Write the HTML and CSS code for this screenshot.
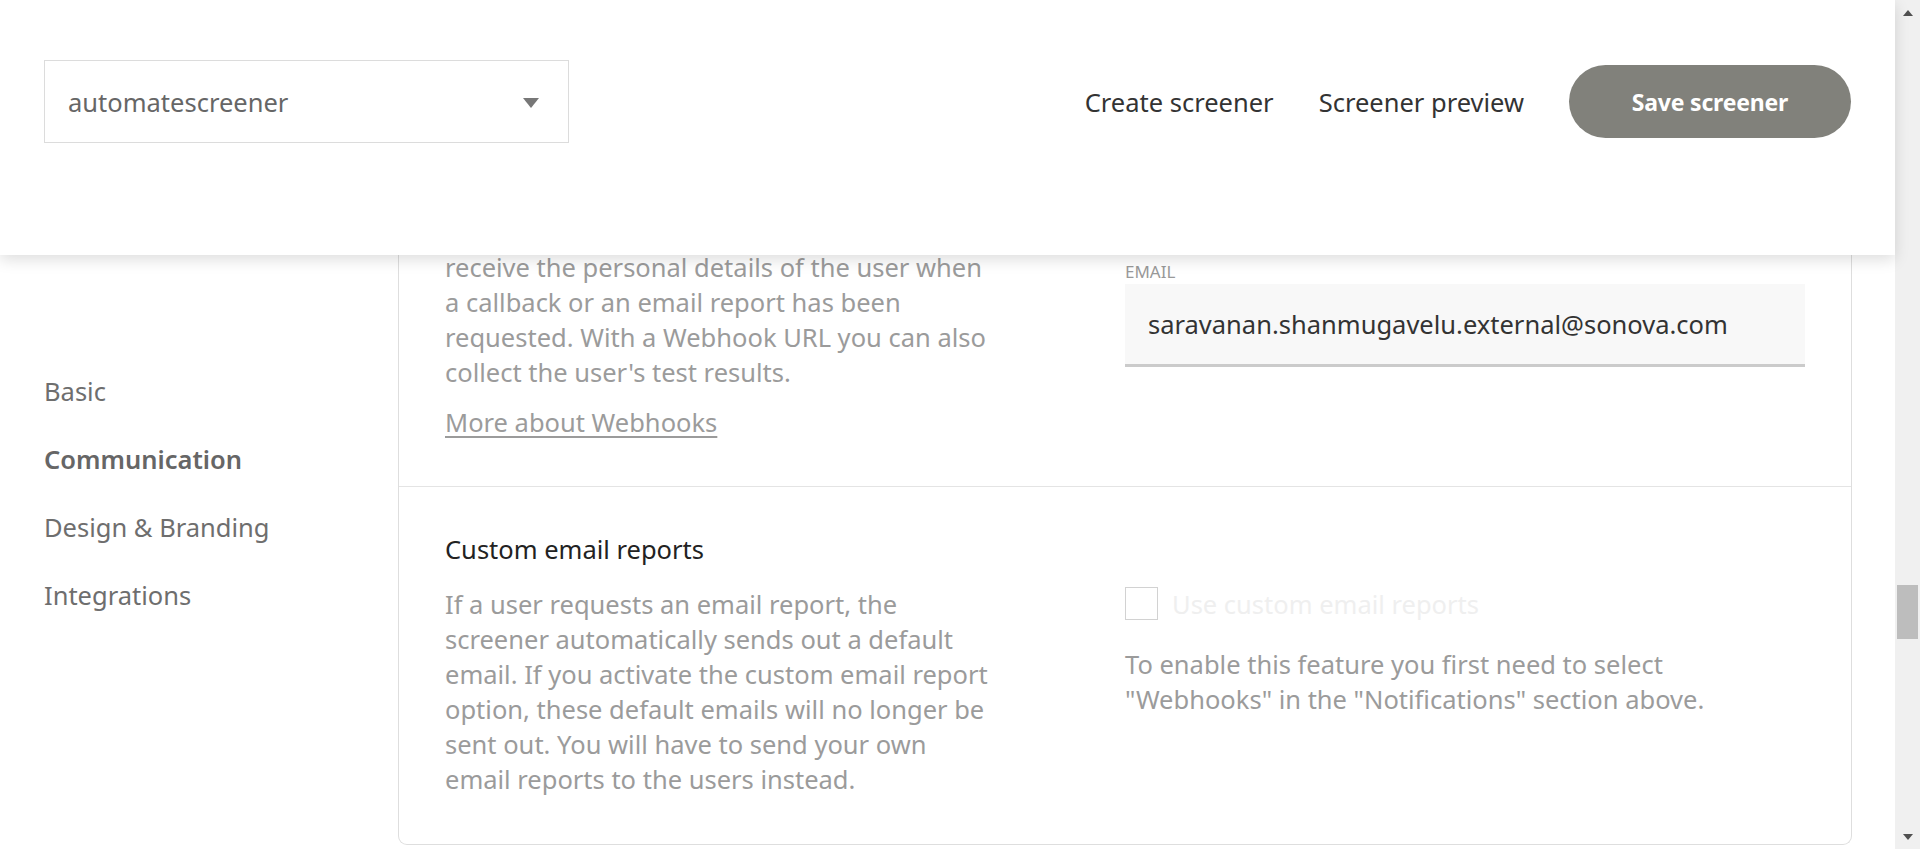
FILE: index.html
```html
<!DOCTYPE html>
<html lang="en">
<head>
<meta charset="utf-8">
<title>Screener settings</title>
<link rel="stylesheet" href="styles.css">
</head>
<body>
<div class="app">
  <div class="page">
    <header class="topbar">
      <div class="select">
        <span class="select-value">automatescreener</span>
        <svg class="caret" width="16" height="10" viewBox="0 0 16 10"><path d="M0 0H16L8 10Z" fill="#777"/></svg>
      </div>
      <nav class="actions">
        <a class="action-link" href="#">Create screener</a>
        <a class="action-link" href="#">Screener preview</a>
        <button class="save-btn" type="button">Save screener</button>
      </nav>
    </header>
    <div class="content">
      <aside class="sidenav">
        <a class="nav-item" href="#">Basic</a>
        <a class="nav-item active" href="#">Communication</a>
        <a class="nav-item" href="#">Design &amp; Branding</a>
        <a class="nav-item" href="#">Integrations</a>
      </aside>
      <main class="card">
        <section class="section section-first">
          <div class="grid">
            <div class="col-left">
              <p class="desc">receive the personal details of the user when a callback or an email report has been requested. With a Webhook URL you can also collect the user's test results.</p>
              <a class="more-link" href="#">More about Webhooks</a>
            </div>
            <div class="col-right">
              <label class="field-label">EMAIL</label>
              <div class="field-input">saravanan.shanmugavelu.external@sonova.com</div>
            </div>
          </div>
        </section>
        <section class="section section-second">
          <h3 class="section-title">Custom email reports</h3>
          <div class="grid">
            <div class="col-left">
              <p class="desc">If a user requests an email report, the screener automatically sends out a default email. If you activate the custom email report option, these default emails will no longer be sent out. You will have to send your own email reports to the users instead.</p>
            </div>
            <div class="col-right">
              <div class="checkbox-row">
                <span class="checkbox"></span>
                <span class="checkbox-label">Use custom email reports</span>
              </div>
              <p class="hint">To enable this feature you first need to select "Webhooks" in the "Notifications" section above.</p>
            </div>
          </div>
        </section>
      </main>
    </div>
  </div>
  <div class="scrollbar">
    <div class="sb-btn"><svg width="10" height="6" viewBox="0 0 10 6"><path d="M0 6L5 0L10 6Z" fill="#505050"/></svg></div>
    <div class="sb-track"><div class="sb-thumb"></div></div>
    <div class="sb-btn"><svg width="10" height="6" viewBox="0 0 10 6"><path d="M0 0L10 0L5 6Z" fill="#505050"/></svg></div>
  </div>
</div>
</body>
</html>
```

FILE: styles.css
```css
* { box-sizing: border-box; }
html, body {
  margin: 0;
  padding: 0;
  height: 849px;
  overflow: hidden;
  background: #fff;
  font-family: "Noto Sans", "Open Sans", sans-serif;
}
.app {
  display: flex;
  height: 849px;
}
.page {
  flex: 1;
  display: flex;
  flex-direction: column;
  min-width: 0;
}
.topbar {
  position: relative;
  z-index: 2;
  height: 255px;
  flex: none;
  background: #fff;
  padding: 60px 44px 0 44px;
  display: flex;
  justify-content: space-between;
  align-items: flex-start;
  box-shadow: 0 5px 14px rgba(0,0,0,0.13);
}
.select {
  width: 525px;
  height: 83px;
  border: 1px solid #dcdcdc;
  display: flex;
  align-items: center;
  justify-content: space-between;
  padding: 0 29px 0 23px;
}
.select-value {
  font-size: 25.5px;
  color: #666;
}
.caret { display: block; margin-top: 2px; }
.actions {
  display: flex;
  align-items: center;
  height: 83px;
  gap: 45px;
}
.action-link {
  font-size: 25.5px;
  color: #333;
  text-decoration: none;
}
.save-btn {
  width: 282px;
  height: 73px;
  border: none;
  border-radius: 37px;
  background: #81817b;
  color: #fff;
  font-family: "Noto Sans", "Open Sans", sans-serif;
  font-size: 23px;
  font-weight: 700;
  letter-spacing: -0.2px;
}
.content {
  flex: 1;
  display: flex;
  margin-top: -20px;
  padding-right: 43px;
}
.sidenav {
  width: 398px;
  flex: none;
  padding: 122px 0 0 44px;
  display: flex;
  flex-direction: column;
}
.nav-item {
  font-size: 25.5px;
  line-height: 68px;
  color: #6e6e6e;
  text-decoration: none;
}
.nav-item.active {
  font-weight: 600;
  color: #666;
}
.card {
  flex: 1;
  align-self: flex-start;
  border: 1px solid #dedede;
  border-top: none;
  border-radius: 0 0 9px 9px;
}
.section {
  padding: 0 0 0 46px;
}
.section-first {
  padding-top: 15px;
  padding-bottom: 46px;
}
.section-second {
  border-top: 1px solid #e4e4e4;
  padding-top: 45px;
  padding-bottom: 47px;
}
.grid {
  display: grid;
  grid-template-columns: 550px 680px;
  column-gap: 130px;
}
.desc {
  margin: 0;
  font-size: 25.5px;
  line-height: 35px;
  color: #9b9b9b;
}
.more-link {
  display: inline-block;
  margin-top: 15px;
  font-size: 25.5px;
  line-height: 35px;
  color: #9b9b9b;
  text-decoration: underline;
  text-underline-offset: 4px;
}
.col-right {
  padding-top: 12px;
}
.section-second .col-right { padding-top: 0; }
.field-label {
  display: block;
  font-size: 17px;
  line-height: 20px;
  color: #999;
  margin-bottom: 2px;
}
.field-input {
  height: 83px;
  background: #f8f8f8;
  border-bottom: 3px solid #cbcbcb;
  display: flex;
  align-items: center;
  padding-left: 23px;
  font-size: 25.5px;
  color: #333;
}
.section-title {
  margin: 0 0 20px 0;
  font-size: 25.5px;
  line-height: 35px;
  font-weight: 400;
  color: #222;
}
.checkbox-row {
  display: flex;
  align-items: center;
  gap: 14px;
  height: 33px;
}
.checkbox {
  width: 33px;
  height: 33px;
  border: 1px solid #d2d2d2;
  background: #fff;
  flex: none;
}
.checkbox-label {
  font-size: 25.5px;
  color: #efefef;
}
.hint {
  margin: 27px 0 0 0;
  font-size: 25.5px;
  line-height: 35px;
  color: #9b9b9b;
}
.scrollbar {
  width: 25px;
  flex: none;
  background: #f0f0f0;
  display: flex;
  flex-direction: column;
}
.sb-btn {
  height: 25px;
  display: flex;
  align-items: center;
  justify-content: center;
  flex: none;
}
.sb-track {
  flex: 1;
  padding: 560px 2px 0 2px;
}
.sb-thumb {
  height: 54px;
  background: #bdbdbd;
}
```
